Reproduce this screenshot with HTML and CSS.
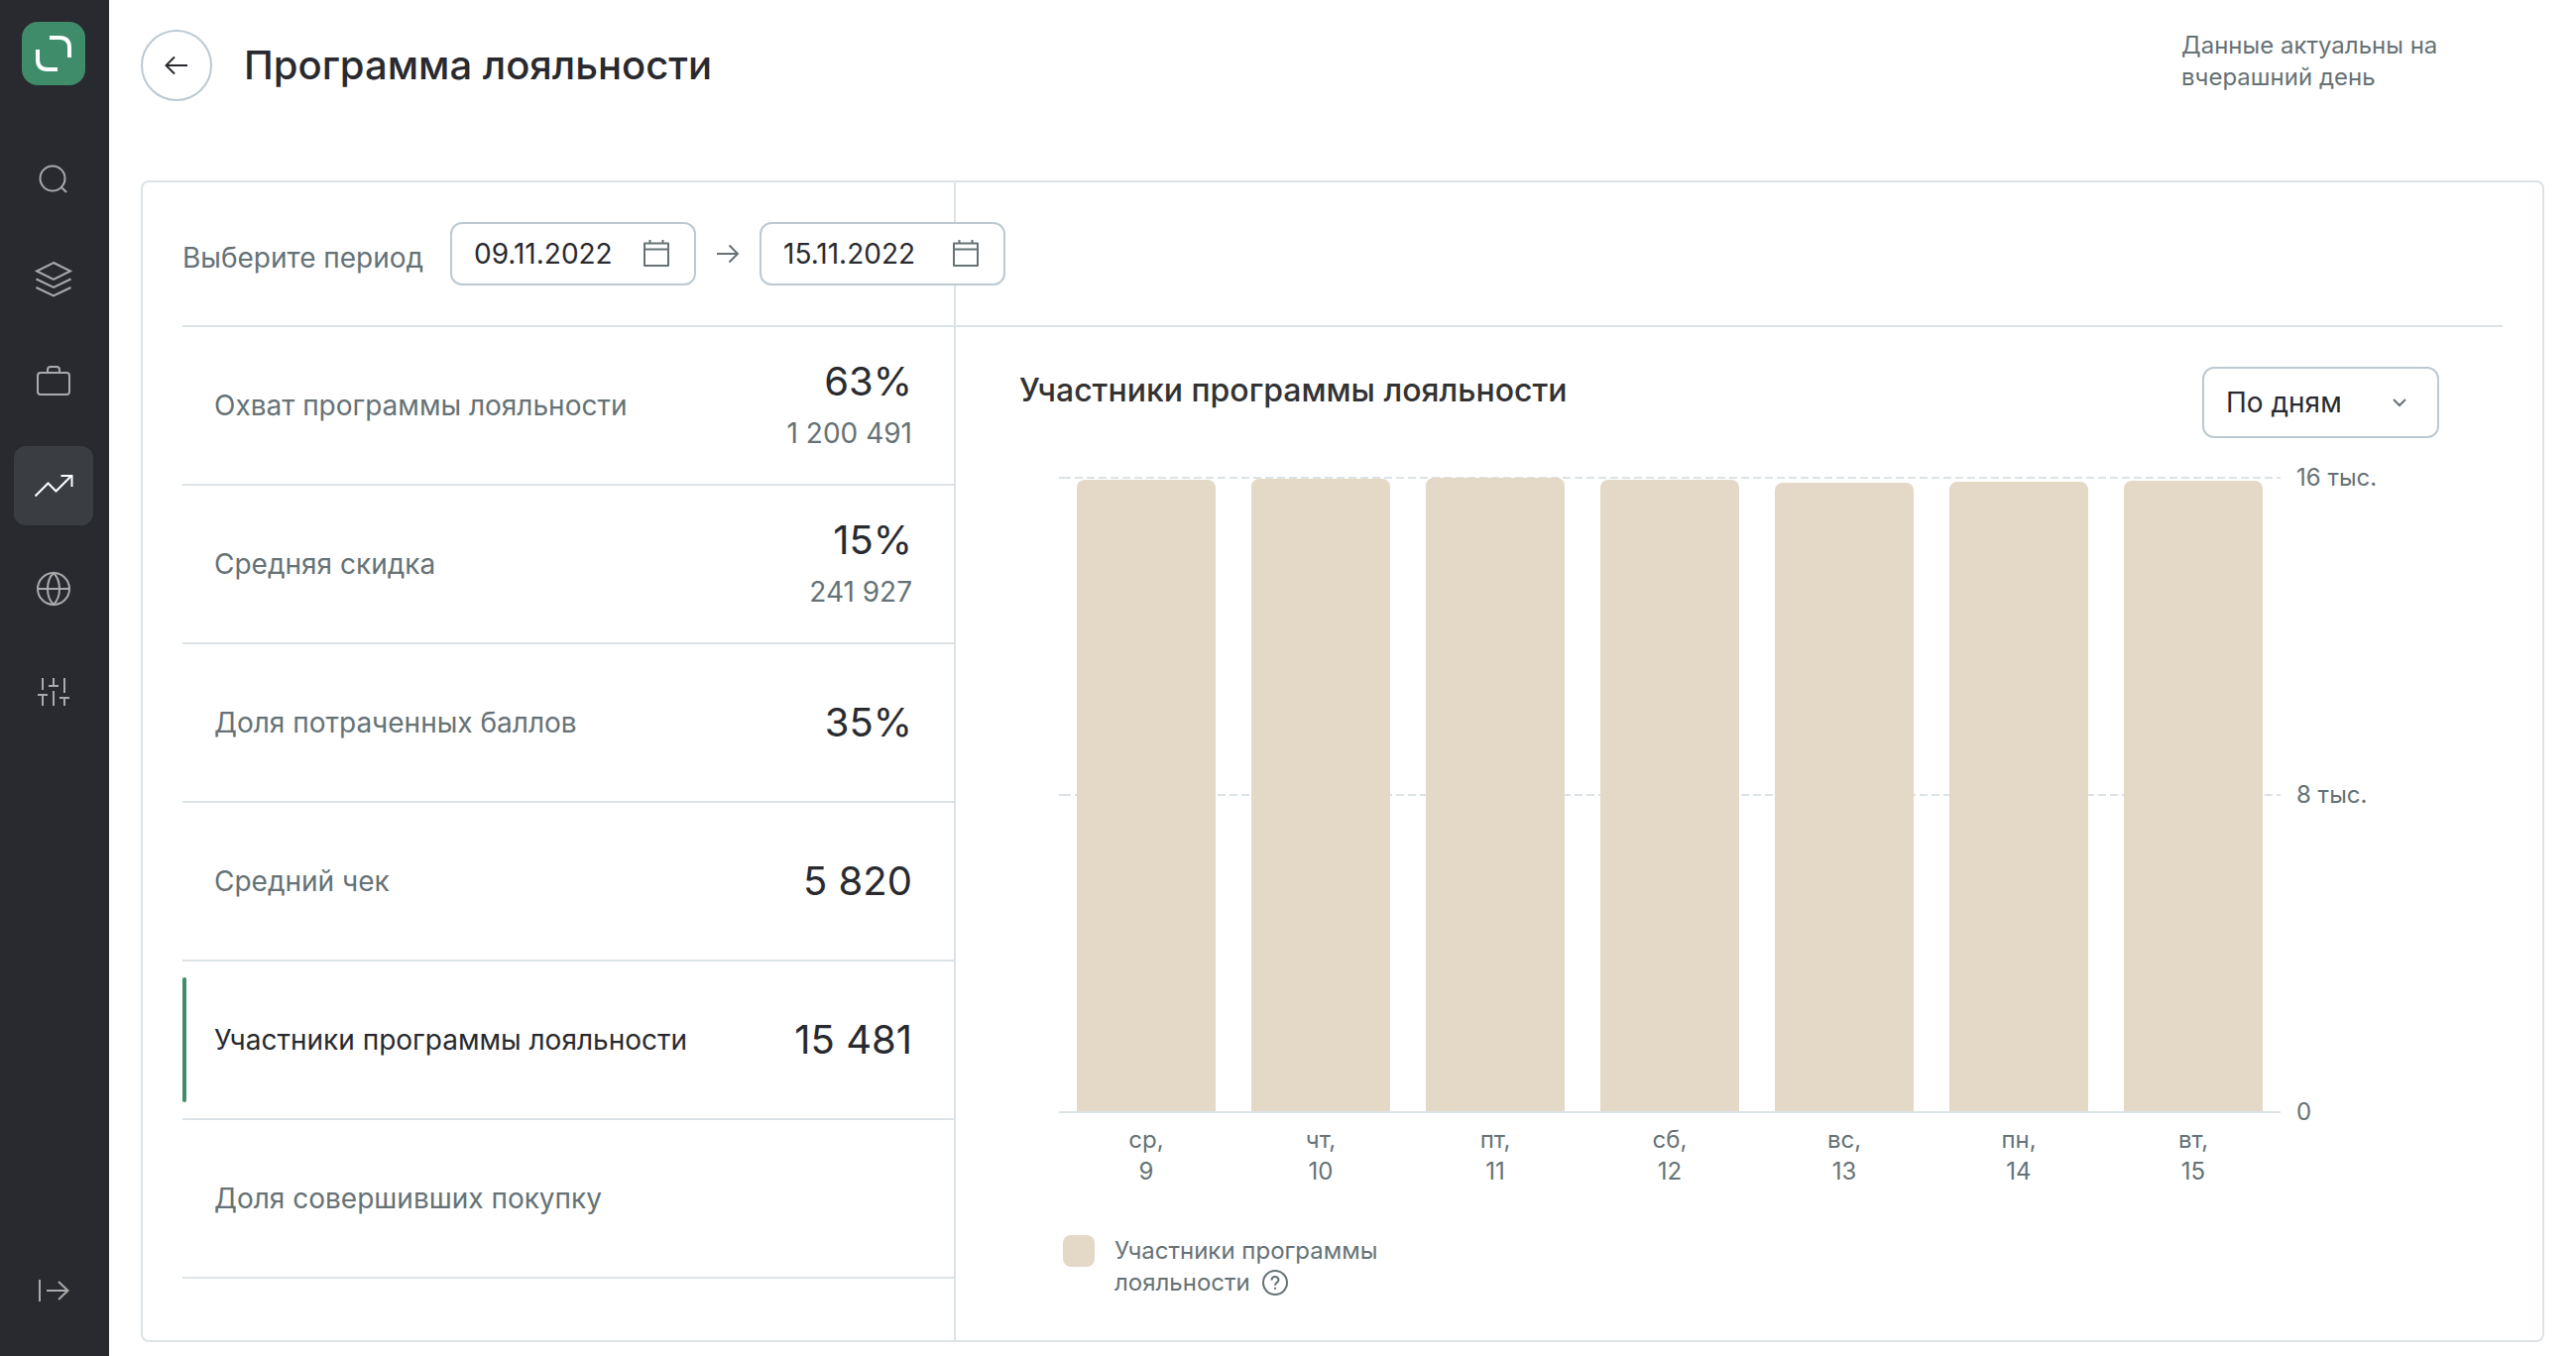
FILE: index.html
```html
<!DOCTYPE html>
<html lang="ru">
<head>
<meta charset="utf-8">
<meta name="viewport" content="width=device-width, initial-scale=1">
<title>Программа лояльности</title>
<link rel="stylesheet" href="styles.css">
</head>
<body>
<div class="app">
  <aside class="sidebar">
    <a class="logo" href="#" aria-label="Главная">
      <svg viewBox="0 0 64 64" fill="none" stroke="#fff" stroke-width="4"><path d="M28 16H38Q48 16 48 26V36"/><path d="M16 28V38Q16 48 26 48H36"/></svg>
    </a>
    <nav class="nav">
      <a class="nav-item" href="#" aria-label="Поиск"><svg class="icon" viewBox="0 0 40 40"><circle cx="19" cy="22" r="12.5"/><path d="M28 31l5 5"/></svg></a>
      <a class="nav-item" href="#" aria-label="Каталог"><svg class="icon" viewBox="0 0 40 40"><path d="M20 3L37 11.500L20 20L3 11.500Z"/><path d="M2.500 19.500L20 28L37.500 19.500"/><path d="M2.500 28L20 36.500L37.500 28"/></svg></a>
      <a class="nav-item" href="#" aria-label="Заказы"><svg class="icon" viewBox="0 0 40 40"><rect x="4" y="10" width="32" height="22" rx="3"/><path d="M14 10V7Q14 4 17 4H23Q26 4 26 7V10"/></svg></a>
      <a class="nav-item active" href="#" aria-label="Аналитика" aria-current="page"><svg class="icon" viewBox="0 0 40 40"><path d="M1.500 30.500L14.500 17.500L22.500 25.500L38 10"/><path d="M27.500 10H38.500V21"/></svg></a>
      <a class="nav-item" href="#" aria-label="Сайт"><svg class="icon" viewBox="0 0 40 40"><circle cx="20" cy="20" r="16"/><path d="M4 20H36"/><path d="M20 4C12 12 12 28 20 36C28 28 28 12 20 4Z"/></svg></a>
      <a class="nav-item" href="#" aria-label="Настройки"><svg class="icon" viewBox="0 0 40 40"><path d="M9 6V18M9 23V34M4 23H14M20 6V14M15 14H25M20 19V34M31 6V21M31 26V34M26 26H36"/></svg></a>
    </nav>
    <button class="expand" type="button" aria-label="Развернуть меню"><svg class="icon" viewBox="0 0 40 40"><path d="M6 9V31M13 20H34M25 11L34.500 20L25 29"/></svg></button>
  </aside>

  <main class="main">
    <header class="header">
      <button class="back" type="button" aria-label="Назад"><svg viewBox="0 0 32 32"><path d="M27 16H5.500M14 7.500L5.500 16L14 24.500"/></svg></button>
      <h1 class="title">Программа лояльности</h1>
      <p class="note">Данные актуальны на вчерашний день</p>
    </header>

    <section class="panel">
      <div class="metrics">
        <div class="period">
          <label class="period-label" for="from">Выберите период</label>
          <div class="date">
            <input id="from" type="text" value="09.11.2022">
            <svg viewBox="0 0 28 32"><path d="M2 5.500H26V28H2ZM2 11.500H26M7.500 2V5M20.500 2V5"/></svg>
          </div>
          <svg class="period-arrow" viewBox="0 0 24 24"><path d="M1 12H22M13.500 3.500L22 12L13.500 20.500"/></svg>
          <div class="date">
            <input id="to" type="text" value="15.11.2022" aria-label="Конец периода">
            <svg viewBox="0 0 28 32"><path d="M2 5.500H26V28H2ZM2 11.500H26M7.500 2V5M20.500 2V5"/></svg>
          </div>
        </div>
        <ul class="metric-list">
          <li class="metric"><span class="metric-name">Охват программы лояльности</span><span class="metric-data"><span class="value">63%</span><span class="sub">1 200 491</span></span></li>
          <li class="metric"><span class="metric-name">Средняя скидка</span><span class="metric-data"><span class="value">15%</span><span class="sub">241 927</span></span></li>
          <li class="metric"><span class="metric-name">Доля потраченных баллов</span><span class="metric-data"><span class="value">35%</span></span></li>
          <li class="metric"><span class="metric-name">Средний чек</span><span class="metric-data"><span class="value">5 820</span></span></li>
          <li class="metric selected"><span class="metric-name">Участники программы лояльности</span><span class="metric-data"><span class="value">15 481</span></span></li>
          <li class="metric"><span class="metric-name">Доля совершивших покупку</span></li>
        </ul>
      </div>

      <div class="details">
        <div class="details-top"></div>
        <div class="chart-card">
          <div class="chart-head">
            <h2 class="chart-title">Участники программы лояльности</h2>
            <div class="select">
              <select aria-label="Группировка"><option>По дням</option></select>
              <svg viewBox="0 0 16 10"><path d="M2 2L8 8L14 2"/></svg>
            </div>
          </div>
          <div class="chart">
            <div class="plot">
              <div class="grid-lines"><i class="dash"></i><i class="dash"></i><i class="axis"></i></div>
              <div class="bars">
                <div class="slot"><div class="bar" style="height:99.6%"></div></div>
                <div class="slot"><div class="bar" style="height:99.7%"></div></div>
                <div class="slot"><div class="bar" style="height:99.9%"></div></div>
                <div class="slot"><div class="bar" style="height:99.5%"></div></div>
                <div class="slot"><div class="bar" style="height:99.1%"></div></div>
                <div class="slot"><div class="bar" style="height:99.2%"></div></div>
                <div class="slot"><div class="bar" style="height:99.4%"></div></div>
              </div>
            </div>
            <div class="y-labels"><span>16 тыс.</span><span>8 тыс.</span><span>0</span></div>
            <div class="x-labels">
              <span>ср,<br>9</span><span>чт,<br>10</span><span>пт,<br>11</span><span>сб,<br>12</span><span>вс,<br>13</span><span>пн,<br>14</span><span>вт,<br>15</span>
            </div>
          </div>
          <div class="legend">
            <span class="swatch"></span>
            <span class="legend-text">Участники программы лояльности <svg class="help" viewBox="0 0 28 28"><circle cx="14" cy="14" r="12"/><path d="M10.500 11.500C10.500 7 17.500 7 17.500 11.300C17.500 14 14 13.800 14 16.800M14 18.800V20.800"/></svg></span>
          </div>
        </div>
      </div>
    </section>
  </main>
</div>
</body>
</html>
```
FILE: styles.css
```css
:root {
  --dark: #292a2f;
  --grey: #667276;
  --line: #dce3e6;
  --control: #bdc9d1;
  --green: #3f8c6b;
  --beige: #e4d9c7;
}

* { box-sizing: border-box; }

body {
  margin: 0;
  background: #fff;
  color: var(--dark);
  font: 400 28px/40px Inter, "Liberation Sans", sans-serif;
}

h1, h2, p, ul { margin: 0; padding: 0; }
svg { display: block; fill: none; stroke: currentColor; stroke-width: 2; flex: none; }
input, select, button { font: inherit; color: inherit; }

.app { display: flex; min-height: 100vh; }

/* Sidebar */
.sidebar {
  flex: none;
  width: 110px;
  padding: 22px 14px 26px;
  background: var(--dark);
  color: #a9aaac;
  display: flex;
  flex-direction: column;
}
.logo { width: 64px; height: 64px; margin-left: 8px; border-radius: 16px; background: var(--green); }
.logo svg { stroke: #fff; stroke-width: 4; }
.nav { display: flex; flex-direction: column; gap: 24px; margin-top: 52px; }
.nav-item, .expand {
  width: 80px;
  height: 80px;
  display: flex;
  align-items: center;
  justify-content: center;
  border-radius: 12px;
  color: inherit;
}
.nav-item.active { background: #3a3d42; color: #fff; }
.icon { width: 40px; height: 40px; }
.expand { margin-top: auto; padding: 0; border: 0; background: none; }

/* Header */
.main { flex: 1; min-width: 0; padding: 30px 32px 14px; }
.header { display: flex; align-items: center; }
.back {
  width: 72px;
  height: 72px;
  padding: 0;
  border: 2px solid var(--control);
  border-radius: 50%;
  background: #fff;
  display: flex;
  align-items: center;
  justify-content: center;
}
.back svg { width: 32px; height: 32px; }
.title { margin-left: 32px; font-size: 40px; line-height: 48px; font-weight: 500; }
.note { width: 366px; margin-left: auto; padding-right: 100px; font-size: 24px; line-height: 32px; color: var(--grey); align-self: flex-start; }

/* Panel */
.panel {
  display: grid;
  grid-template-columns: 820px 1fr;
  margin-top: 80px;
  border: 2px solid var(--line);
  border-radius: 8px;
}
.metrics { border-right: 2px solid var(--line); padding: 0 0 62px 40px; }
.period {
  display: flex;
  align-items: center;
  height: 146px;
  border-bottom: 2px solid var(--line);
  white-space: nowrap;
}
.period-label { flex: none; width: 270px; padding-top: 8px; color: var(--grey); }
.date {
  position: relative;
  flex: none;
  display: flex;
  align-items: center;
  width: 248px;
  height: 64px;
  padding: 0 24px 0 22px;
  border: 2px solid var(--control);
  border-radius: 12px;
  background: #fff;
}
.date input { flex: 1; min-width: 0; padding: 0; border: 0; outline: 0; background: none; }
.date svg { width: 28px; height: 32px; color: var(--grey); stroke-linejoin: round; }
.period-arrow { width: 24px; height: 24px; margin: 0 20px; color: var(--grey); }

.metric-list { list-style: none; }
.metric {
  display: flex;
  align-items: center;
  justify-content: space-between;
  height: 160px;
  padding: 0 42px 0 32px;
  border-bottom: 2px solid var(--line);
  color: var(--grey);
}
.metric-data { display: flex; flex-direction: column; align-items: flex-end; gap: 8px; }
.value { font-size: 40px; line-height: 48px; color: var(--dark); }
.metric.selected { position: relative; color: var(--dark); }
.metric.selected::before {
  content: "";
  position: absolute;
  left: 0;
  top: 16px;
  bottom: 16px;
  width: 4px;
  border-radius: 2px;
  background: var(--green);
}

/* Chart */
.details-top { height: 146px; margin-right: 40px; border-bottom: 2px solid var(--line); }
.chart-card { padding: 40px 104px 0 64px; }
.chart-head { display: flex; justify-content: space-between; align-items: flex-start; }
.chart-title { padding-top: 4px; font-size: 32px; line-height: 40px; font-weight: 500; color: #333; }
.select { position: relative; width: 239px; height: 72px; }
.select select {
  width: 100%;
  height: 100%;
  padding: 0 56px 0 22px;
  border: 2px solid var(--control);
  border-radius: 12px;
  background: #fff;
  appearance: none;
}
.select svg { position: absolute; right: 32px; top: 31px; width: 16px; height: 10px; color: var(--grey); pointer-events: none; }

.chart {
  display: grid;
  grid-template-columns: 1fr 160px;
  margin: 39px 0 0 40px;
  font-size: 24px;
  line-height: 32px;
  color: var(--grey);
}
.plot { position: relative; height: 642px; }
.grid-lines { position: absolute; inset: 0; display: flex; flex-direction: column; justify-content: space-between; }
.dash {
  height: 2px;
  background:
    linear-gradient(var(--line), var(--line)) left / 4px 2px no-repeat,
    repeating-linear-gradient(90deg, transparent 0 4px, var(--line) 4px 12px);
}
.axis { height: 2px; background: var(--line); }
.bars { position: relative; display: grid; grid-template-columns: repeat(7, 1fr); height: 640px; }
.slot { display: flex; align-items: flex-end; padding: 0 18px; }
.bar { width: 100%; background: var(--beige); border-radius: 8px 8px 0 0; }
.y-labels { display: flex; flex-direction: column; justify-content: space-between; margin: -15px 0; padding-left: 16px; }
.x-labels { display: grid; grid-template-columns: repeat(7, 1fr); padding-top: 11px; text-align: center; }
.legend { display: flex; gap: 20px; margin: 48px 0 0 44px; font-size: 24px; line-height: 32px; color: var(--grey); }
.swatch { flex: none; width: 32px; height: 32px; border-radius: 8px; background: var(--beige); }
.legend-text { width: 280px; }
.help { display: inline-block; width: 28px; height: 28px; margin-left: 4px; vertical-align: -6px; }
```
